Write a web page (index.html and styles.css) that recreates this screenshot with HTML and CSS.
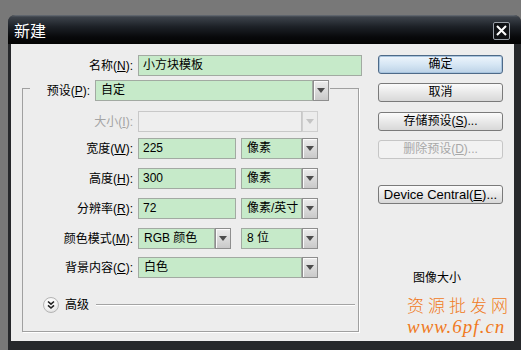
FILE: index.html
```html
<!DOCTYPE html>
<html lang="zh-CN">
<head>
<meta charset="utf-8">
<title>新建</title>
<link rel="stylesheet" href="styles.css">
</head>
<body>
<div class="window">
  <div class="titlebar">
    <span class="title">新建</span>
    <span class="close"><svg width="11" height="11" viewBox="0 0 11 11"><path d="M1 1L10 10M10 1L1 10" stroke="#fff" stroke-width="2" fill="none"/></svg></span>
  </div>
  <div class="client">
    <div class="form">
      <div class="row">
        <label class="lbl lbl-name">名称(<u>N</u>):</label>
        <div class="field w-name">小方块模板</div>
      </div>
      <div class="group">
        <div class="legend">
          <label class="lbl lbl-preset">预设(<u>P</u>):</label>
          <div class="select w-preset"><span class="val">自定</span><span class="dd"><i class="tri"></i></span></div>
        </div>
        <div class="row r-size">
          <label class="lbl disabled">大小(<u>I</u>):</label>
          <div class="select w-full off"><span class="val"></span><span class="dd"><i class="tri"></i></span></div>
        </div>
        <div class="row r-w">
          <label class="lbl">宽度(<u>W</u>):</label>
          <div class="field w-num">225</div>
          <div class="select w-unit"><span class="val">像素</span><span class="dd"><i class="tri"></i></span></div>
        </div>
        <div class="row r-n">
          <label class="lbl">高度(<u>H</u>):</label>
          <div class="field w-num">300</div>
          <div class="select w-unit"><span class="val">像素</span><span class="dd"><i class="tri"></i></span></div>
        </div>
        <div class="row r-n">
          <label class="lbl">分辨率(<u>R</u>):</label>
          <div class="field w-num">72</div>
          <div class="select w-unit"><span class="val">像素/英寸</span><span class="dd"><i class="tri"></i></span></div>
        </div>
        <div class="row r-n">
          <label class="lbl">颜色模式(<u>M</u>):</label>
          <div class="select w-mode"><span class="val">RGB 颜色</span><span class="dd"><i class="tri"></i></span></div>
          <div class="select w-unit"><span class="val">8 位</span><span class="dd"><i class="tri"></i></span></div>
        </div>
        <div class="row r-bg">
          <label class="lbl">背景内容(<u>C</u>):</label>
          <div class="select w-full"><span class="val">白色</span><span class="dd"><i class="tri"></i></span></div>
        </div>
        <div class="adv">
          <span class="circle"><svg width="10" height="10" viewBox="0 0 10 10"><path d="M2 1.5L5 4.2L8 1.5M2 5.3L5 8L8 5.3" stroke="#222" stroke-width="1.6" fill="none"/></svg></span>
          <span class="adv-text">高级</span>
          <span class="adv-line"></span>
        </div>
      </div>
    </div>
    <div class="buttons">
      <div class="button default">确定</div>
      <div class="button b-cancel">取消</div>
      <div class="button b-save">存储预设(<u>S</u>)...</div>
      <div class="button b-del disabled">删除预设(<u>D</u>)...</div>
      <div class="button b-dev">Device Central(<u>E</u>)...</div>
      <div class="imgsize">图像大小</div>
    </div>
    <div class="watermark">
      <div class="wm1">资源批发网</div>
      <div class="wm2">www.6pf.cn</div>
    </div>
  </div>
</div>
</body>
</html>
```

FILE: styles.css
```css
html, body {
  margin: 0;
  padding: 0;
}
body {
  background: #787878;
  width: 521px;
  height: 350px;
  overflow: hidden;
  font-family: "Liberation Sans", "Noto Sans CJK SC", sans-serif;
  font-size: 12px;
  color: #000;
}
u { text-decoration: underline; text-underline-offset: 1px; }

.window {
  margin: 15px 0 0 8px;
  width: 513px;
  height: 335px;
  background: #26282b;
  border-radius: 7px 7px 0 0;
  display: flex;
  flex-direction: column;
  box-sizing: border-box;
}
.titlebar {
  flex: none;
  height: 29px;
  border-radius: 7px 7px 0 0;
  background: linear-gradient(#6a7078 0, #3c424a 2px, #1c2026 12px, #08090b 22px, #030303 100%);
  display: flex;
  align-items: center;
  justify-content: space-between;
  padding: 0 11px 0 6px;
}
.title {
  color: #fff;
  font-family: "Noto Sans CJK SC", sans-serif;
  font-size: 16px;
  line-height: 18px;
}
.close {
  width: 15px;
  height: 16px;
  border: 1px solid #9aa0a8;
  border-radius: 2px;
  background: #101215;
  display: flex;
  align-items: center;
  justify-content: center;
  margin-top: 2px;
}

.client {
  flex: 1;
  margin: 0 7px 9px 3px;
  background: #ededed;
  padding: 11px 0 0 11px;
  display: flex;
  position: relative;
}
.form {
  width: 340px;
  flex: none;
}
.row {
  display: flex;
  align-items: center;
  gap: 5px;
  height: 21px;
}
.lbl {
  width: 110px;
  flex: none;
  text-align: right;
  white-space: nowrap;
  line-height: 14px;
}
.lbl-name { width: 111px; }
.lbl.disabled { color: #a4a4a4; }

.field, .select .val {
  height: 21px;
  box-sizing: border-box;
  background: #c6eac9;
  border: 1px solid #a2aaa2;
  padding: 0 4px;
  line-height: 19px;
  white-space: nowrap;
  overflow: hidden;
}
.w-name { width: 224px; }
.w-num { width: 98px; }
.select {
  display: flex;
  height: 21px;
}
.select .val { flex: 1; }
.select .val { padding-left: 5px; }
.w-preset { width: 234px; }
.w-full { width: 180px; }
.w-unit { width: 77px; margin-left: 0; }
.w-mode { width: 93px; margin-right: 5px; }
.dd {
  width: 16px;
  flex: none;
  box-sizing: border-box;
  border: 1px solid #8e8e8e;
  background: linear-gradient(#ececec, #c9c9c9);
  display: flex;
  align-items: center;
  justify-content: center;
  box-shadow: inset 1px 1px 0 #fafafa;
}
.tri {
  width: 0;
  height: 0;
  border-left: 4px solid transparent;
  border-right: 4px solid transparent;
  border-top: 5px solid #4c4c4c;
}
.off .val {
  background: #eeeeee;
  border-color: #c8c8c8;
}
.off .dd {
  border-color: #cfcfcf;
  background: #ececec;
  box-shadow: none;
}
.off .tri { border-top-color: #c4c4c4; }

.group {
  margin-top: 12px;
  width: 337px;
  box-sizing: border-box;
  border: 1px solid #a0a0a0;
  box-shadow: 1px 1px 0 #ffffff;
  padding: 0 0 18px 0;
}
.legend {
  margin: -9px 0 0 7px;
  padding: 0 1px 0 15px;
  background: #ededed;
  display: flex;
  align-items: center;
  gap: 5px;
  width: max-content;
  height: 21px;
}
.lbl-preset { width: 45px; }
.r-size { margin-top: 10px; }
.r-w { margin-top: 6px; }
.r-n { margin-top: 9px; }
.r-bg { margin-top: 8px; }

.adv {
  margin-top: 19px;
  height: 16px;
  display: flex;
  align-items: center;
  padding: 0 3px 0 20px;
}
.circle {
  width: 14px;
  height: 14px;
  border: 1px solid #b4b4b4;
  border-radius: 50%;
  background: radial-gradient(circle at 45% 35%, #ffffff 0, #f4f4f4 50%, #d2d2d2 100%);
  display: flex;
  align-items: center;
  justify-content: center;
}
.adv-text {
  margin-left: 6px;
  line-height: 14px;
}
.adv-line {
  flex: 1;
  margin-left: 7px;
  border-top: 1px solid #a4a4a4;
  border-bottom: 1px solid #ffffff;
  height: 0;
}

.buttons {
  margin-left: 16px;
  width: 125px;
  flex: none;
  display: flex;
  flex-direction: column;
}
.button {
  height: 19px;
  box-sizing: border-box;
  border: 1px solid #7a7a7a;
  border-radius: 3px;
  background: linear-gradient(#fbfbfb, #e9e9e9 50%, #d8d8d8);
  text-align: center;
  line-height: 17px;
  white-space: nowrap;
}
.button.default {
  border-color: #4e6a88;
  background: linear-gradient(#eef5fc, #d6e6f4 50%, #bcd2e6);
  box-shadow: inset 0 0 0 1px #a8c4de;
}
.b-cancel { margin-top: 9px; }
.b-save { margin-top: 10px; }
.b-del { margin-top: 9px; }
.button.disabled {
  color: #a8a8a8;
  border-color: #c6c6c6;
  background: #f2f2f2;
}
.b-dev {
  margin-top: 26px;
  font-size: 13px;
}
.imgsize {
  margin: 67px 0 0 35px;
  line-height: 14px;
}

.watermark {
  position: absolute;
  left: 396px;
  top: 250px;
  color: #f07a22;
  font-family: "Noto Sans CJK SC", sans-serif;
}
.wm1 {
  font-size: 17px;
  line-height: 22px;
  letter-spacing: 4px;
  font-weight: 300;
}
.wm2 {
  font-family: "Liberation Serif", serif;
  font-style: italic;
  font-size: 19px;
  line-height: 22px;
  letter-spacing: 1px;
}
```
